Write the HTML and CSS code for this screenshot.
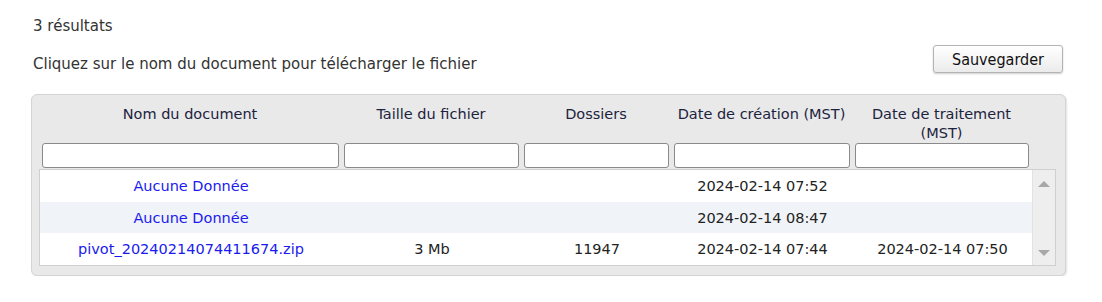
FILE: index.html
```html
<!DOCTYPE html>
<html lang="fr">
<head>
    <meta charset="UTF-8">
    <title>Documents</title>
    <link rel="stylesheet" href="styles.css">
</head>
<body>
    <div class="page">
        <p class="count">3 résultats</p>

        <div class="toolbar">
            <p class="hint">Cliquez sur le nom du document pour télécharger le fichier</p>
            <button class="save-btn">Sauvegarder</button>
        </div>

        <div class="grid">
            <div class="grid-row grid-head">
                <div class="th">Nom du document</div>
                <div class="th">Taille du fichier</div>
                <div class="th">Dossiers</div>
                <div class="th">Date de création (MST)</div>
                <div class="th">Date de traitement<br>(MST)</div>
            </div>
            <div class="grid-row grid-filters">
                <div class="filter"><input type="text"></div>
                <div class="filter"><input type="text"></div>
                <div class="filter"><input type="text"></div>
                <div class="filter"><input type="text"></div>
                <div class="filter"><input type="text"></div>
            </div>

            <div class="grid-body">
                <div class="rows">
                    <div class="grid-row data">
                        <div class="td"><a href="#">Aucune Donnée</a></div>
                        <div class="td"></div>
                        <div class="td"></div>
                        <div class="td">2024-02-14 07:52</div>
                        <div class="td"></div>
                    </div>
                    <div class="grid-row data alt">
                        <div class="td"><a href="#">Aucune Donnée</a></div>
                        <div class="td"></div>
                        <div class="td"></div>
                        <div class="td">2024-02-14 08:47</div>
                        <div class="td"></div>
                    </div>
                    <div class="grid-row data">
                        <div class="td"><a href="#">pivot_20240214074411674.zip</a></div>
                        <div class="td">3 Mb</div>
                        <div class="td">11947</div>
                        <div class="td">2024-02-14 07:44</div>
                        <div class="td">2024-02-14 07:50</div>
                    </div>
                </div>
                <div class="scrollbar">
                    <span class="arrow up"></span>
                    <span class="arrow down"></span>
                </div>
            </div>
        </div>
    </div>
</body>
</html>
```

FILE: styles.css
```css
* {
    margin: 0;
    padding: 0;
    box-sizing: border-box;
}

body {
    font-family: 'DejaVu Sans', Verdana, sans-serif;
    font-size: 15px;
    color: #333;
    background: #fff;
}

.page {
    padding: 17px 0 0 31px;
    width: 1066px;
}

.count {
    padding-left: 2px;
    line-height: 18px;
}

.toolbar {
    display: flex;
    justify-content: space-between;
    align-items: center;
    margin-top: 10px;
}

.hint {
    padding-left: 2px;
    padding-top: 10px;
    line-height: 18px;
}

.save-btn {
    font-family: 'DejaVu Sans Condensed', 'DejaVu Sans', sans-serif;
    font-size: 16px;
    color: #111;
    width: 130px;
    height: 28px;
    margin-right: 3px;
    border: 1px solid #b4b4b4;
    border-radius: 3px;
    background: linear-gradient(#ffffff, #ebebeb);
    box-shadow: 0 1px 2px rgba(0, 0, 0, 0.2);
}

.grid {
    margin-top: 21px;
    background: #e9e9e9;
    border: 1px solid #d4d4d4;
    border-radius: 6px;
    box-shadow: 1px 1px 2px rgba(0, 0, 0, 0.12);
    padding: 0 9px 9px 7px;
    height: 182px;
    font-size: 14.5px;
}

.grid-row {
    display: grid;
    grid-template-columns: 302px 180px 150px 181px 179px;
}

.grid-head {
    padding-top: 10px;
    height: 48px;
}

.th {
    text-align: center;
    color: #1c2340;
    line-height: 19px;
}

.grid-filters {
    height: 26px;
}

.filter {
    padding: 0 2px 0 3px;
}

.filter input {
    width: 100%;
    height: 25px;
    border: 1px solid #8a8a8a;
    border-radius: 3px;
    background: #fff;
}

.grid-body {
    display: flex;
    background: #fff;
    border: 1px solid #cfcfcf;
    height: 97px;
    overflow: hidden;
}

.rows {
    width: 992px;
}

.data {
    height: 32px;
    align-items: center;
}

.data.alt {
    background: #f0f3f7;
    height: 31px;
}

.td {
    text-align: center;
    color: #222;
}

.td a {
    color: #1a1aee;
    text-decoration: none;
}

.scrollbar {
    flex: 1;
    background: #eeeeee;
    border-left: 1px solid #e2e2e2;
    display: flex;
    flex-direction: column;
    justify-content: space-between;
    align-items: center;
    padding: 11px 0 9px;
}

.arrow {
    width: 0;
    height: 0;
    border-left: 6px solid transparent;
    border-right: 6px solid transparent;
}

.arrow.up {
    border-bottom: 6px solid #a8a8a8;
}

.arrow.down {
    border-top: 6px solid #a8a8a8;
}
```
